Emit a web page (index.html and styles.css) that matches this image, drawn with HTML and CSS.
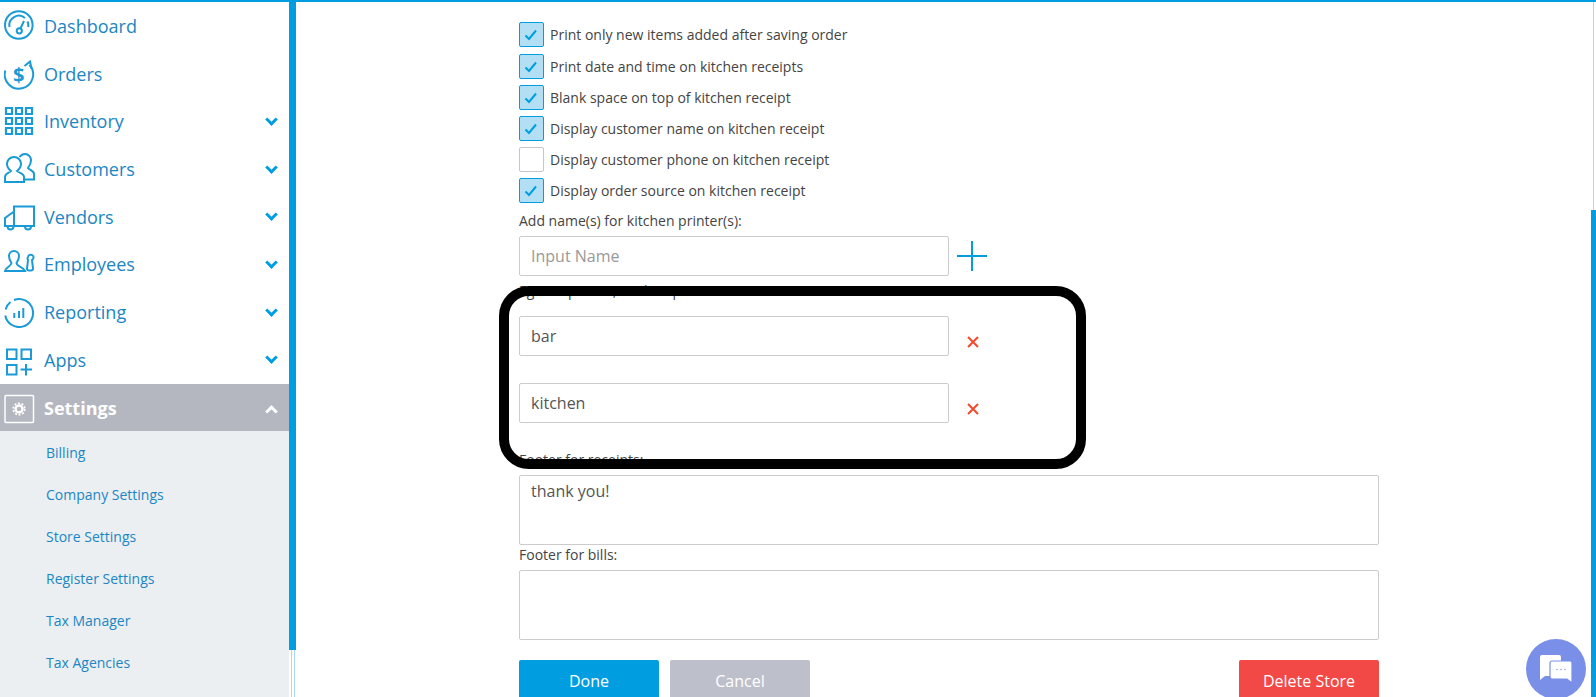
FILE: index.html
```html
<!DOCTYPE html>
<html lang="en">
<head>
<meta charset="utf-8">
<title>Store Settings</title>
<link rel="stylesheet" href="styles.css">
</head>
<body>
<div class="topline"></div>
<div class="app">
  <nav class="sidebar">
    <a class="nav-item"><span class="nav-icon"><svg viewBox="0 0 32 32" width="32" height="32" fill="none" stroke="#1a9ad6" stroke-width="2"><circle cx="14.8" cy="15" r="13.8"/><path d="M5.5 17a9.500 9.500 0 0 1 15.500-9"/><path d="M23.500 11.500a9.500 9.500 0 0 1 .8 5.500"/><circle cx="15.300" cy="20.800" r="2.600"/><path d="M16.500 18.500 L20 10.800"/></svg></span><span class="nav-label">Dashboard</span></a>
    <a class="nav-item"><span class="nav-icon"><svg viewBox="0 0 32 32" width="32" height="32" fill="none" stroke="#1a9ad6" stroke-width="2"><path d="M1.300 12.500A14.200 14.200 0 1 0 25.500 7"/><path d="M20.500 8l5.500-4.500 1.500 7"/><text class="dollar" x="14.700" y="24" text-anchor="middle">$</text></svg></span><span class="nav-label">Orders</span></a>
    <a class="nav-item"><span class="nav-icon"><svg viewBox="0 0 32 32" width="32" height="32" fill="none" stroke="#1a9ad6" stroke-width="2.200"><path d="M2 3h6v6H2zM12 3h6v6h-6zM22 3h6v6h-6zM2 13h6v6H2zM12 13h6v6h-6zM22 13h6v6h-6zM2 23h6v6H2zM12 23h6v6h-6zM22 23h6v6h-6z"/></svg></span><span class="nav-label">Inventory</span><span class="chev"></span></a>
    <a class="nav-item"><span class="nav-icon"><svg viewBox="0 0 32 32" width="32" height="32" fill="none" stroke="#1a9ad6" stroke-width="2"><path d="M1 29V24C1 20 6 19.500 7 18C4.500 16 3 13.500 3 11A7 7 0 0 1 17 11C17 13.500 15.500 16 13 18C14 19.500 20 20 20 24V29Z"/><path d="M15.500 4C17 2 19 1 21 1C24.500 1 27 4 27 7.500C27 10.500 25.500 13 24 15C25 17 30 17.500 30 21V26.500H21"/></svg></span><span class="nav-label">Customers</span><span class="chev"></span></a>
    <a class="nav-item"><span class="nav-icon"><svg viewBox="0 0 32 32" width="32" height="32" fill="none" stroke="#1a9ad6" stroke-width="2"><path d="M10 25V5.500H30V25H1V17L10 10.500"/><path d="M3.500 25.500a3 3 0 0 0 6 0M21 25.500a3 3 0 0 0 6 0"/></svg></span><span class="nav-label">Vendors</span><span class="chev"></span></a>
    <a class="nav-item"><span class="nav-icon"><svg viewBox="0 0 32 32" width="32" height="32" fill="none" stroke="#1a9ad6" stroke-width="2"><path d="M1 23C2 18.500 7 19 7.500 15C6 13 5 11 5 8A5 5 0 0 1 15 8C15 11 14 13 12.500 15C13 19 19 18.500 21 23Z"/><path d="M24 9a2.800 2.800 0 1 1 4 3l1 8.500a2 2 0 0 1-2 2h-2a2 2 0 0 1-2-2l1-8.500a2.800 2.800 0 0 1 0-3z"/></svg></span><span class="nav-label">Employees</span><span class="chev"></span></a>
    <a class="nav-item"><span class="nav-icon"><svg viewBox="0 0 32 32" width="32" height="32" fill="none" stroke="#1a9ad6" stroke-width="2"><path d="M1.600 13.500A14 14 0 0 1 6.500 6M10 4A14 14 0 1 1 1.300 19.500"/><path d="M10.300 22v-5M15 22v-7M19.300 22V12"/></svg></span><span class="nav-label">Reporting</span><span class="chev"></span></a>
    <a class="nav-item"><span class="nav-icon"><svg viewBox="0 0 32 32" width="32" height="32" fill="none" stroke="#1a9ad6" stroke-width="2"><path d="M3 5.500h9.500V15H3zM17.500 5.500H27V15h-9.500zM3 21h9.500v9.500H3zM16.500 25.500H28M22 20v11.500"/></svg></span><span class="nav-label">Apps</span><span class="chev"></span></a>
    <a class="nav-item is-open"><span class="nav-icon"><svg viewBox="0 0 32 32" width="32" height="32" fill="none"><rect x="1" y="3.500" width="28.500" height="27" rx="1" stroke="#fff" stroke-width="1.500"/><circle cx="15" cy="17" r="3.500" stroke="#fff" stroke-width="2.500"/><circle cx="15" cy="17" r="5.800" stroke="#fff" stroke-width="1.600" stroke-dasharray="2 1.650"/></svg></span><span class="nav-label">Settings</span><span class="chev up"></span></a>
    <div class="subnav">
      <a class="sub-item">Billing</a>
      <a class="sub-item">Company Settings</a>
      <a class="sub-item">Store Settings</a>
      <a class="sub-item">Register Settings</a>
      <a class="sub-item">Tax Manager</a>
      <a class="sub-item">Tax Agencies</a>
    </div>
  </nav>
  <div class="side-scroll"><div class="side-thumb"></div></div>
  <main class="content">
    <form class="form">
      <div class="check-row"><span class="check on"><svg viewBox="0 0 23 23" width="23" height="23" fill="none" stroke="#009ee0" stroke-width="2"><path d="M5.500 12.500l3.500 3.500 7-8.500"/></svg></span><span>Print only new items added after saving order</span></div>
      <div class="check-row"><span class="check on"><svg viewBox="0 0 23 23" width="23" height="23" fill="none" stroke="#009ee0" stroke-width="2"><path d="M5.500 12.500l3.500 3.500 7-8.500"/></svg></span><span>Print date and time on kitchen receipts</span></div>
      <div class="check-row"><span class="check on"><svg viewBox="0 0 23 23" width="23" height="23" fill="none" stroke="#009ee0" stroke-width="2"><path d="M5.500 12.500l3.500 3.500 7-8.500"/></svg></span><span>Blank space on top of kitchen receipt</span></div>
      <div class="check-row"><span class="check on"><svg viewBox="0 0 23 23" width="23" height="23" fill="none" stroke="#009ee0" stroke-width="2"><path d="M5.500 12.500l3.500 3.500 7-8.500"/></svg></span><span>Display customer name on kitchen receipt</span></div>
      <div class="check-row"><span class="check"></span><span>Display customer phone on kitchen receipt</span></div>
      <div class="check-row"><span class="check on"><svg viewBox="0 0 23 23" width="23" height="23" fill="none" stroke="#009ee0" stroke-width="2"><path d="M5.500 12.500l3.500 3.500 7-8.500"/></svg></span><span>Display order source on kitchen receipt</span></div>
      <div class="label first">Add name(s) for kitchen printer(s):</div>
      <div class="input-row add-row"><div class="input placeholder">Input Name</div><svg class="plus" viewBox="0 0 30 30" width="30" height="30" fill="none" stroke="#009ee0" stroke-width="2"><path d="M15 0v30M0 15h30"/></svg></div>
      <div class="label edit">Eg: Bar printer, Kitchen printer</div>
      <div class="input-row first-name"><div class="input">bar</div><svg class="remove" viewBox="0 0 12 12" width="12" height="12" fill="none" stroke="#f4492c" stroke-width="2"><path d="M1 1l10 10M11 1L1 11"/></svg></div>
      <div class="input-row second"><div class="input">kitchen</div><svg class="remove" viewBox="0 0 12 12" width="12" height="12" fill="none" stroke="#f4492c" stroke-width="2"><path d="M1 1l10 10M11 1L1 11"/></svg></div>
      <div class="label receipts">Footer for receipts:</div>
      <div class="textarea">thank you!</div>
      <div class="label bills">Footer for bills:</div>
      <div class="textarea"></div>
      <div class="buttons">
        <button type="button" class="btn done">Done</button>
        <button type="button" class="btn cancel">Cancel</button>
        <button type="button" class="btn delete">Delete Store</button>
      </div>
    </form>
  </main>
  <div class="page-scroll"><div class="page-thumb"></div></div>
</div>
<div class="highlight"></div>
<div class="chat"><svg viewBox="0 0 34 30" width="34" height="30"><path d="M1 3a2 2 0 0 1 2-2h17a2 2 0 0 1 2 2v17a2 2 0 0 1-2 2H6l-5 4z" fill="#fff"/><path d="M11 9a2 2 0 0 1 2-2h18a2 2 0 0 1 2 2v20l-5-4H13a2 2 0 0 1-2-2z" fill="#fff" stroke="#7a8fe8" stroke-width="1.200"/><circle cx="18" cy="15.500" r=".8" fill="#8ea0ee"/><circle cx="22" cy="15.500" r=".8" fill="#8ea0ee"/><circle cx="26" cy="15.500" r=".8" fill="#8ea0ee"/></svg></div>
</body>
</html>
```

FILE: styles.css
```css
* { box-sizing: border-box; }
html, body { margin: 0; height: 100%; overflow: hidden; }
body { background: #fff; font-family: "Open Sans", sans-serif; color: #444; position: relative; }
.topline { height: 2px; background: #009ee0; }
.app { display: flex; height: 695px; overflow: hidden; }
.sidebar { width: 289px; flex: none; padding-top: 0.2px; }
.nav-item { display: flex; align-items: center; height: 47.7px; padding: 0 10px 0 4px; color: #1c86c4; font-size: 18px; }
.nav-icon { width: 32px; height: 32px; flex: none; margin-right: 8px; display: flex; }
.dollar { font: 700 20px "Open Sans", sans-serif; fill: #1a9ad6; stroke: none; }
.nav-label { flex: 1; }
.chev { width: 9px; height: 9px; border-right: 3px solid #009ee0; border-bottom: 3px solid #009ee0; transform: rotate(45deg); margin: -4px 3px 0 0; }
.chev.up { border-color: #fff; transform: rotate(225deg); margin-top: 7px; }
.is-open { background: #b4b7c0; color: #fff; font-weight: 700; }
.subnav { background: #ebeff2; height: 270px; }
.sub-item { display: flex; align-items: center; height: 42px; padding-left: 46px; color: #1c86c4; font-size: 14px; }
.side-scroll { width: 7px; flex: none; position: relative; }
.side-scroll::before { content: ""; position: absolute; left: 2px; top: 0; bottom: 0; width: 1px; background: #a9dcf3; }
.side-scroll::after { content: ""; position: absolute; left: 5px; top: 0; bottom: 0; width: 1px; background: #a9dcf3; }
.side-thumb { height: 648px; background: #009ee0; position: relative; z-index: 1; }
.content { flex: 1; min-width: 0; }
.form { width: 860px; margin-left: 223px; padding-top: 17.4px; font-size: 14px; }
.check-row { display: flex; align-items: center; height: 31.2px; gap: 6px; color: #444; }
.check { width: 25px; height: 25px; flex: none; border: 1px solid #c4c6cf; border-radius: 2px; background: #fff; display: flex; }
.check.on { background: #b3dff4; border-color: #009ee0; }
.label { line-height: 18px; color: #444; }
.label.first { margin-top: 5.6px; }
.input-row { display: flex; align-items: center; margin-top: 6px; }
.input { width: 430px; height: 40px; padding: 0 11px; border: 1px solid #ccc; border-radius: 2px; font-size: 16px; line-height: 38px; color: #555; flex: none; }
.placeholder { color: #999; }
.plus { margin-left: 8px; }
.remove { margin: 11px 0 0 18px; }
.label.edit { margin-top: 6px; }
.input-row.first-name { margin-top: 16px; }
.input-row.second { margin-top: 27px; }
.label.receipts { margin-top: 27.5px; margin-bottom: 6px; }
.textarea { height: 70px; padding: 4.5px 11px; border: 1px solid #ccc; border-radius: 2px; font-size: 16px; line-height: 22px; color: #555; }
.label.bills { margin-top: 1px; margin-bottom: 6px; }
.buttons { display: flex; gap: 11px; margin-top: 20px; }
.btn { width: 140px; height: 42px; border: 0; border-radius: 2px; color: #fff; font: 16px "Open Sans", sans-serif; }
.done { background: #009ee0; }
.cancel { background: #bdc0ca; }
.delete { background: #f24846; margin-left: auto; }
.page-scroll { width: 5px; flex: none; position: relative; }
.page-scroll::before { content: ""; position: absolute; left: 2px; top: 0; bottom: 0; width: 1px; background: #a9dcf3; }
.page-thumb { position: absolute; left: 0; right: 0; top: 208px; bottom: 0; background: #009ee0; }
.highlight { position: absolute; left: 499px; top: 286px; width: 587px; height: 183px; border: 10px solid #000; border-radius: 30px; }
.chat { position: absolute; left: 1526px; top: 639px; width: 60px; height: 60px; border-radius: 50%; background: #7a8fe8; display: flex; align-items: center; justify-content: center; }
```
